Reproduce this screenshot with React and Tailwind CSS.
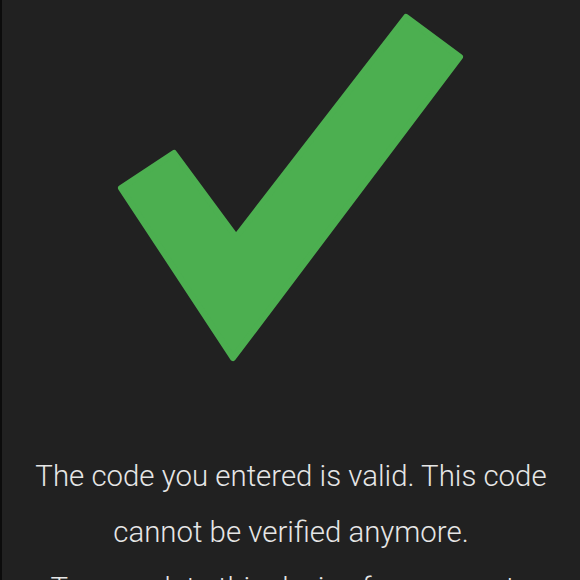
export default function App() {
  return (
    <div className="w-[580px] h-[580px] overflow-hidden bg-[#212121] border-l-2 border-[#0c0c0c] flex flex-col">
      {/* Check mark */}
      <svg width="578" height="448" viewBox="0 0 578 448" className="shrink-0">
        <polygon
          points="121,188 174,153 236,237 406,17 460,57 233,358"
          fill="#4caf50"
          stroke="#4caf50"
          strokeWidth="6"
          strokeLinejoin="round"
          transform="translate(-2,0)"
        />
      </svg>

      {/* Message */}
      <div className="flex flex-col items-center text-[29.4px] leading-[56px] font-light text-[#e6e6e6] font-['Roboto',sans-serif] whitespace-nowrap">
        <p>The code you entered is valid. This code</p>
        <p>cannot be verified anymore.</p>
        <p>To complete this device for anyone to</p>
      </div>
    </div>
  );
}
